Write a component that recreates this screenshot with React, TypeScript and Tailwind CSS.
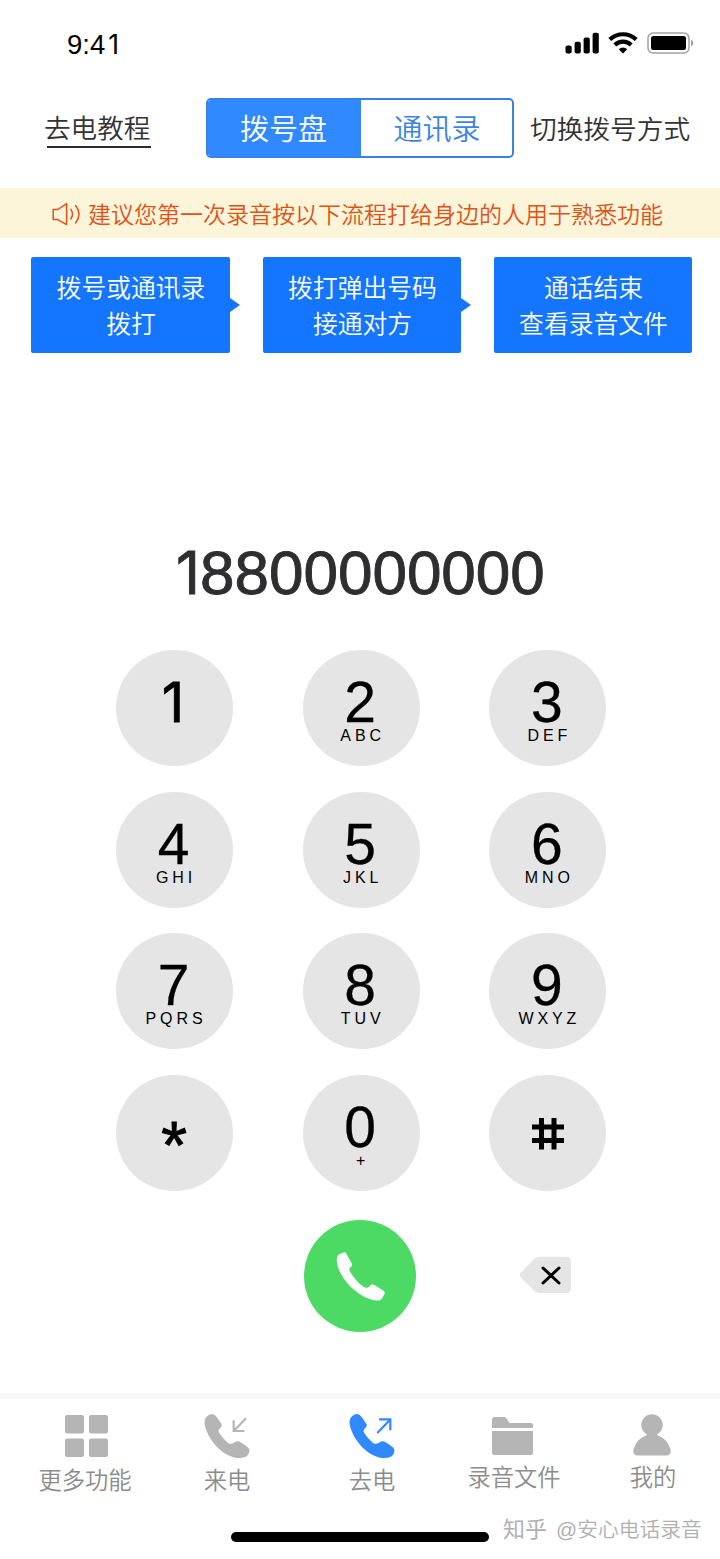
import React from 'react';

const keys = [
  { digit: '1', letters: '' },
  { digit: '2', letters: 'ABC' },
  { digit: '3', letters: 'DEF' },
  { digit: '4', letters: 'GHI' },
  { digit: '5', letters: 'JKL' },
  { digit: '6', letters: 'MNO' },
  { digit: '7', letters: 'PQRS' },
  { digit: '8', letters: 'TUV' },
  { digit: '9', letters: 'WXYZ' },
  { digit: '*', letters: '' },
  { digit: '0', letters: '+' },
  { digit: '#', letters: '' },
];

const steps = [
  { lines: ['拨号或通讯录', '拨打'], width: 'w-[199px]', arrow: true },
  { lines: ['拨打弹出号码', '接通对方'], width: 'w-[198px]', arrow: true },
  { lines: ['通话结束', '查看录音文件'], width: 'w-[198px]', arrow: false },
];

function StatusBar() {
  return (
    <div className="flex h-[88px] justify-between pl-[67px] pr-[26px]">
      <span className="mt-[26px] text-[27.5px] leading-9 text-black">
        9:4<span className="ml-[3px] font-['Inter'] text-[26.5px] font-normal">1</span>
      </span>
      <div className="mt-8 flex h-[22px] items-center">
        <svg className="h-[22px] w-[34px]" viewBox="0 0 34 22">
          <rect x="0.5" y="13.5" width="6.2" height="8" rx="2" />
          <rect x="9.6" y="9.8" width="6.2" height="11.7" rx="2" />
          <rect x="18.6" y="5.4" width="6.2" height="16.1" rx="2" />
          <rect x="27.6" y="0.8" width="6.2" height="20.7" rx="2" />
        </svg>
        <svg className="ml-[9px] h-[22px] w-[30px]" viewBox="0 0 30 22" fill="none" stroke="#000" strokeWidth="4.2">
          <path d="M1.8 7.6 A19 19 0 0 1 28.2 7.6" />
          <path d="M6.8 12.9 A12 12 0 0 1 23.2 12.9" />
          <path d="M15 21.5 L10.8 17.2 A6.2 6.2 0 0 1 19.2 17.2 Z" fill="#000" stroke="none" />
        </svg>
        <svg className="ml-[9px] h-[22px] w-[47px]" viewBox="0 0 47 22">
          <rect x="1" y="1" width="41" height="20" rx="5" fill="none" stroke="#a3a3a3" strokeWidth="1.5" />
          <rect x="4" y="4" width="35" height="14" rx="2.5" />
          <path d="M44 7.5 Q49 11 44 14.5 Z" fill="#a3a3a3" />
        </svg>
      </div>
    </div>
  );
}

function Header() {
  return (
    <div className="flex h-[100px] items-start pl-11">
      <a className="relative mt-5 w-[107px] whitespace-nowrap text-[26.6px] leading-[42px] text-[#333]">
        去电教程
        <span className="absolute bottom-0.5 left-[3px] right-0 h-0.5 bg-[#2b2b2b]" />
      </a>
      <div className="ml-[55px] mt-[10px] flex h-[60px] w-[308px] overflow-hidden rounded-[5px] border-2 border-[#3a83e6] text-[29px] leading-[61px]">
        <div className="-ml-0.5 -mt-0.5 h-[60px] w-[155px] bg-[#3189ff] pt-0.5 text-center text-white">拨号盘</div>
        <div className="flex-1 pl-px text-center text-[#3d85e0]">通讯录</div>
      </div>
      <span className="ml-4 mt-[21px] whitespace-nowrap text-[26.7px] leading-[42px] text-[#333]">切换拨号方式</span>
    </div>
  );
}

function Notice() {
  return (
    <div className="flex h-[50px] items-center bg-[#fcf5da] pl-[52px] text-[#e05216]">
      <svg className="mt-0.5 h-[24px] w-[29px]" viewBox="0 0 29 24" fill="none" stroke="currentColor" strokeWidth="1.5" strokeLinejoin="round" strokeLinecap="round">
        <path d="M1.2 7.5 H5.8 L14.6 1.6 V22.6 L5.8 17.6 H1.2 Z" />
        <path d="M18.8 7.4 Q22.2 12.2 18.8 17" />
        <path d="M23.6 3.5 Q30.4 12.2 23.6 21" />
      </svg>
      <span className="ml-[7px] whitespace-nowrap pt-[3px] text-[23px] leading-[50px]">
        建议您第一次录音按以下流程打给身边的人用于熟悉功能
      </span>
    </div>
  );
}

function Steps() {
  return (
    <div className="mt-[19px] flex justify-between pl-[31px] pr-7">
      {steps.map((step) => (
        <div
          key={step.lines[0]}
          className={`relative h-24 rounded-[2px] bg-[#1476ff] pt-[14px] text-center text-[24.8px] leading-9 text-white ${step.width}`}
        >
          {step.lines.map((line) => (
            <div key={line} className="pl-px">{line}</div>
          ))}
          {step.arrow && (
            <svg className="absolute -right-[10px] top-[41px] h-[14px] w-[11px]" viewBox="0 0 11 14" fill="#1476ff">
              <path d="M0 0 H1 L11 7 L1 14 H0 Z" />
            </svg>
          )}
        </div>
      ))}
    </div>
  );
}

function KeyFace({ digit, letters }: { digit: string; letters: string }) {
  if (digit === '*') {
    return <span className="mt-[30px] pr-px text-[66px] leading-[80px] [-webkit-text-stroke:1px_#000]">*</span>;
  }
  if (digit === '#') {
    return (
      <svg className="mt-[43px] h-8 w-8" viewBox="0 0 32 32" stroke="#000" strokeWidth="5" aria-label="#">
        <path d="M9.5 0 V31.5 M22 0 V31.5 M0 9 H32 M0 22.5 H32" />
      </svg>
    );
  }
  if (digit === '1') {
    return (
      <span className="mt-[30px] pr-[3px] font-['Inter'] text-[55px] font-normal leading-[44px] [-webkit-text-stroke:0.8px_#000]">1</span>
    );
  }
  return (
    <>
      <span className="mt-[30px] pr-0.5 text-[57px] leading-[44px] [-webkit-text-stroke:0.3px_#000]">{digit}</span>
      {letters && (
        <span className="mt-1 pl-[3px] text-[16px] leading-4 tracking-[3.9px]">{letters}</span>
      )}
    </>
  );
}

function Keypad() {
  return (
    <div className="ml-[116px] mt-[26px] grid w-[490px] grid-cols-3 gap-x-[70px] gap-y-[25.5px]">
      {keys.map((key) => (
        <div key={key.digit} className="flex h-[116px] w-[117px] flex-col items-center rounded-full bg-[#e5e5e5] text-black">
          <KeyFace {...key} />
        </div>
      ))}
    </div>
  );
}

function CallRow() {
  return (
    <div className="mt-[29.5px] flex h-28 items-center pl-[304px]">
      <div className="flex h-28 w-28 items-center justify-center rounded-full bg-[#4cd964]">
        <svg className="h-[54px] w-[55px]" viewBox="130 118 165 162" fill="#fff">
          <path d="M150 133 Q141 138 141 152 C144 200 200 262 255 272 Q270 274 276 268 L284 254 Q287 248 282 243 L254 226 Q247 222 243 226 L238 232 Q230 236 222 232 C205 220 190 203 180 184 Q177 178 183 172 Q190 168 186 161 L170 132 Q166 126 160 129 Z" />
        </svg>
      </div>
      <svg className="mb-0.5 ml-[103px] h-[38px] w-[53px]" viewBox="0 0 53 38">
        <path d="M1.5 17 L15 3 Q17.5 0.7 21 0.7 H47 Q52 0.7 52 5.7 V32 Q52 37 47 37 H21 Q17.5 37 15 34.5 L1.5 21 Q0 19 1.5 17 Z" fill="#e5e5e5" />
        <path d="M24 12 L40 27 M40 12 L24 27" stroke="#000" strokeWidth="3" strokeLinecap="round" />
      </svg>
    </div>
  );
}

const phone =
  'M622 93 Q612 100 614 118 C622 160 660 208 705 218 Q730 222 740 214 Q750 204 748 194 Q746 186 722 172 Q712 166 704 172 Q696 178 688 176 C676 168 662 152 656 140 Q654 136 660 130 Q668 124 664 116 L650 96 Q638 80 622 93 Z';

function PhoneIcon({ arrow }: { arrow: string }) {
  return (
    <svg className="h-[48px] w-[50px]" viewBox="606 81 150 144">
      <path d={phone} fill="currentColor" />
      <path d={arrow} fill="none" stroke="currentColor" strokeWidth="6.5" />
    </svg>
  );
}

function TabBar() {
  return (
    <div className="flex h-[119px] items-start pl-[38px] text-[23.3px] leading-8 text-[#8c8c8c]">
      <div className="flex w-[94px] flex-col items-center">
        <svg className="ml-0.5 mt-4 h-[42px] w-[43px]" viewBox="0 0 43 42" fill="#b5b5b5">
          <rect width="19" height="18.5" rx="2" />
          <rect x="24" width="19" height="18.5" rx="2" />
          <rect y="23.5" width="19" height="18.5" rx="2" />
          <rect x="24" y="23.5" width="19" height="18.5" rx="2" />
        </svg>
        <span className="mt-2 whitespace-nowrap">更多功能</span>
      </div>
      <div className="ml-[70px] flex w-[50px] flex-col items-center">
        <div className="mt-[13px] text-[#b5b5b5]">
          <PhoneIcon arrow="M738 100 L702 137 M701 106 V138 H733" />
        </div>
        <span className="mt-[5px] whitespace-nowrap">来电</span>
      </div>
      <div className="ml-[95px] flex w-[50px] flex-col items-center">
        <div className="mt-[13px] text-[#3189ff]">
          <PhoneIcon arrow="M697 144 L735 104 M702 103 H736 V136" />
        </div>
        <span className="mt-[5px] whitespace-nowrap">去电</span>
      </div>
      <div className="ml-[70px] flex w-[94px] flex-col items-center">
        <svg className="mr-[3px] mt-[18px] h-[38px] w-[41px]" viewBox="0 0 41 38" fill="#b5b5b5">
          <path d="M0 11 V2.5 Q0 0 2.5 0 H12 Q14 0 15 2 L17.5 6 H38.5 Q41 6 41 8.5 V11 Z" />
          <path d="M0 14 H41 V35.5 Q41 38 38.5 38 H2.5 Q0 38 0 35.5 Z" />
        </svg>
        <span className="mt-[7px] whitespace-nowrap">录音文件</span>
      </div>
      <div className="ml-[67px] flex w-[50px] flex-col items-center">
        <svg className="mr-0.5 mt-[15px] h-[42px] w-[38px]" viewBox="0 0 38 42" fill="#b5b5b5">
          <circle cx="19" cy="11" r="10.7" />
          <path d="M14 20 H24 Q24 21.5 26 22 Q34 25 37.5 35 Q39 41.5 33 41.5 H5 Q-1 41.5 0.5 35 Q4 25 12 22 Q14 21.5 14 20 Z" />
        </svg>
        <span className="mt-[6px] whitespace-nowrap">我的</span>
      </div>
    </div>
  );
}

export default function App() {
  return (
    <div className="flex h-[1559px] w-[720px] flex-col overflow-hidden bg-white font-['Liberation_Sans','Noto_Sans_CJK_SC',sans-serif] font-[350]">
      <StatusBar />
      <Header />
      <Notice />
      <Steps />

      {/* Dialed number */}
      <div className="ml-[176px] mt-[184px] flex h-[87px] whitespace-nowrap text-[62px] leading-[72px] text-[#2e2e30] [-webkit-text-stroke:0.9px_#2e2e30]">
        <span className="w-6 font-['Inter'] text-[59px] font-normal">1</span>
        <span>8800000000</span>
      </div>

      <Keypad />
      <CallRow />

      <div className="mt-[61px] h-1.5 bg-[#f7f7f7]" />
      <TabBar />

      {/* Home indicator and watermark */}
      <div className="flex h-10 items-start">
        <div className="ml-[231px] mt-[14px] h-[10px] w-[258px] rounded-full bg-black" />
        <div className="ml-[14px] flex h-6 items-center whitespace-nowrap text-[20.8px] leading-5 text-[#b0b0b0]">
          <span className="text-[22px] font-normal">知乎</span>
          <span className="ml-[9px]">@安心电话录音</span>
        </div>
      </div>
    </div>
  );
}
